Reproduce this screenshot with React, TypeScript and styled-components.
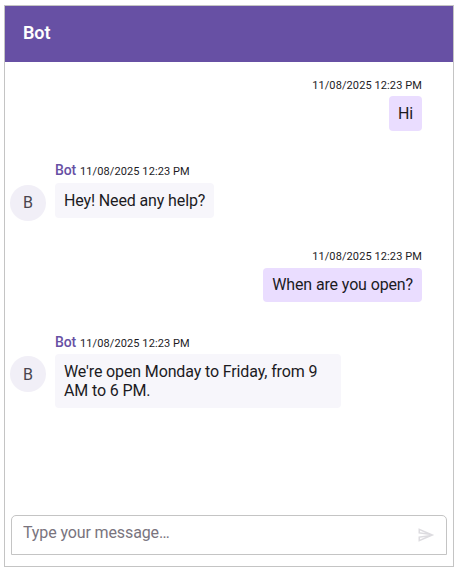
import React from "react";
import styled, { createGlobalStyle } from "styled-components";

const GlobalStyle = createGlobalStyle`
  * { box-sizing: border-box; }
  body { margin: 0; background: #fff; font-family: Roboto, "Liberation Sans", sans-serif; color: #1c1b1f; }
`;

const ChatWindow = styled.main`
  width: 450px;
  height: 562px;
  margin: 5px 0 0 4px;
  border: 1px solid #c4c4c4;
  display: flex;
  flex-direction: column;
  background: #fff;
`;

const Header = styled.header`
  height: 56px;
  flex: none;
  padding: 0 18px 2px;
  display: flex;
  align-items: center;
  background: #6750a4;
  color: #fff;
  font-size: 18px;
  font-weight: 600;
  letter-spacing: -0.1px;
  line-height: 24px;
`;

const MessageList = styled.section`
  flex: 1;
  padding: 14px 31px 0 5px;
  display: flex;
  flex-direction: column;
`;

const Message = styled.article<{ $own?: boolean }>`
  height: 85.8px;
  flex: none;
  display: flex;
  align-items: flex-start;
  gap: 9px;
  justify-content: ${(p) => (p.$own ? "flex-end" : "flex-start")};
`;

const Avatar = styled.div`
  width: 36px;
  height: 36px;
  margin-top: 23px;
  flex: none;
  display: flex;
  align-items: center;
  justify-content: center;
  border-radius: 50%;
  background: #f1eff7;
  color: #49454e;
  font-size: 16px;
`;

const Content = styled.div<{ $own?: boolean }>`
  display: flex;
  flex-direction: column;
  align-items: ${(p) => (p.$own ? "flex-end" : "flex-start")};
  max-width: 286px;
`;

const Meta = styled.div<{ $own?: boolean }>`
  height: ${(p) => (p.$own ? 20 : 21)}px;
  padding-top: ${(p) => (p.$own ? 0.6 : 0.2)}px;
  display: flex;
  align-items: baseline;
  gap: 4px;
  line-height: 17px;
  font-size: 11px;
  letter-spacing: 0.1px;
  white-space: nowrap;
`;

const Author = styled.span`
  color: #6750a4;
  font-size: 14px;
  font-weight: 500;
  letter-spacing: -0.15px;
`;

const Bubble = styled.div<{ $own?: boolean }>`
  padding: 8.8px 9px 7.2px;
  border-radius: 4px;
  background: ${(p) => (p.$own ? "#eaddff" : "#f7f6fb")};
  font-size: 16px;
  letter-spacing: -0.13px;
  line-height: 18.75px;
`;

const Composer = styled.form`
  height: 40px;
  margin: 0 6px 11px;
  flex: none;
  display: flex;
  align-items: center;
  padding: 0 11px;
  border: 1px solid #c4c4c4;
  border-radius: 5px 5px 0 0;
`;

const MessageInput = styled.input`
  flex: 1;
  min-width: 0;
  padding: 0 0 5px;
  border: 0;
  outline: 0;
  background: transparent;
  font: 16px Roboto, "Liberation Sans", sans-serif;
  letter-spacing: -0.12px;
  &::placeholder { color: #79747e; opacity: 1; }
`;

const SendButton = styled.button`
  width: 19px;
  height: 20px;
  padding: 0;
  border: 0;
  display: flex;
  align-items: center;
  justify-content: center;
  background: transparent;
  color: #dddce0;
`;

const SendIcon = () => (
  <svg width="18" height="18" viewBox="0 0 24 24" fill="currentColor" aria-hidden="true">
    <path d="m4.01 6.03 7.51 3.22-7.52-1 .01-2.22m7.5 8.72L4 17.97v-2.22l7.51-1M2.01 3 2 10l15 2-15 2 .01 7L23 12 2.01 3z" />
  </svg>
);

const messages = [
  { own: true, text: "Hi" },
  { own: false, text: "Hey! Need any help?" },
  { own: true, text: "When are you open?" },
  { own: false, text: "We're open Monday to Friday, from 9 AM to 6 PM." },
];

export default function App() {
  return (
    <>
      <GlobalStyle />
      <ChatWindow>
        <Header>Bot</Header>
        <MessageList>
          {messages.map(({ own, text }) => (
            <Message key={text} $own={own}>
              {!own && <Avatar>B</Avatar>}
              <Content $own={own}>
                <Meta $own={own}>
                  {!own && <Author>Bot</Author>}
                  <time>11/08/2025 12:23 PM</time>
                </Meta>
                <Bubble $own={own}>{text}</Bubble>
              </Content>
            </Message>
          ))}
        </MessageList>
        <Composer onSubmit={(e) => e.preventDefault()}>
          <MessageInput placeholder="Type your message…" aria-label="Message" />
          <SendButton type="submit" aria-label="Send"><SendIcon /></SendButton>
        </Composer>
      </ChatWindow>
    </>
  );
}
